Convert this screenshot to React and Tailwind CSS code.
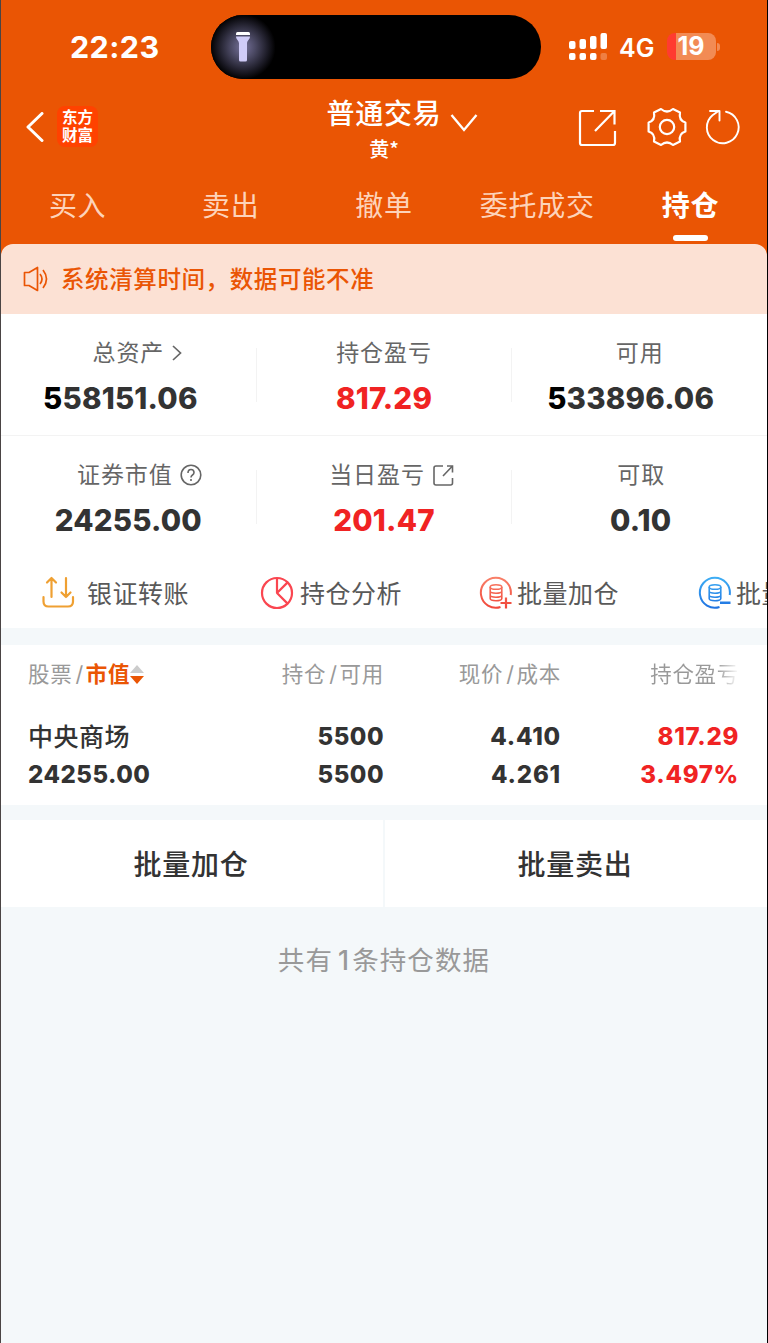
import React from 'react';

const tabs = ['买入', '卖出', '撤单', '委托成交', '持仓'];

const holdings = [
  {
    name: '中央商场',
    value: '24255.00',
    amount: '5500',
    available: '5500',
    price: '4.410',
    cost: '4.261',
    profit: '817.29',
    rate: '3.497%',
  },
];

function StatusBar() {
  return (
    <div className="h-[93px] flex items-center">
      <div className="w-[210px] pl-[69px] pt-[2px] text-[30.500px] leading-none font-bold tracking-[0.400px] text-white">22:23</div>
      <div className="w-[330px] h-16 rounded-full bg-black overflow-hidden">
        <div className="w-16 h-16 flex items-center justify-center bg-[radial-gradient(circle,#77739c_0%,#4a4862_28%,#1c1b26_55%,#000_72%)]">
          <svg width="14" height="30" viewBox="0 0 14 30">
            <path d="M0 1.5Q0 0 1.5 0h11Q14 0 14 1.5V3H0z" fill="#fff" />
            <path d="M0 4.5h14c0 3-3 4-3 7V28q0 1.500-1.500 1.500h-5Q3 29.500 3 28V11.500c0-3-3-4-3-7z" fill="#cfcbf7" />
          </svg>
        </div>
      </div>
      <svg className="ml-7" width="39" height="27" viewBox="0 0 39 27" fill="#fff">
        <rect x="0" y="8" width="6.500" height="8" rx="2" />
        <rect x="10.500" y="6" width="6.500" height="10" rx="2" />
        <rect x="21" y="3" width="6.500" height="13" rx="2" />
        <rect x="31.500" y="0" width="6.500" height="16" rx="2" />
        <rect x="0" y="20" width="6.500" height="7" rx="2" />
        <rect x="10.500" y="20" width="6.500" height="7" rx="2" />
        <rect x="21" y="20" width="6.500" height="7" rx="2" />
        <rect x="31.500" y="20" width="6.500" height="7" rx="2" opacity="0.250" />
      </svg>
      <div className="ml-[11px] w-[36px] pt-[3px] text-[25px] leading-none font-semibold text-white">4G</div>
      <div className="ml-[12px] w-[49px] h-[27px] rounded-[8px] bg-[linear-gradient(90deg,#ff3b30_9px,#f28b54_9px)] pr-[1px] flex items-center justify-center text-[25px] leading-[27px] font-bold text-white">
        19
      </div>
      <div className="ml-[1px] w-[3px] h-2 rounded-r-full bg-[#f28b54]" />
    </div>
  );
}

function Header() {
  return (
    <div className="h-[80px] flex items-start text-white">
      <div className="w-[310px] h-[67px] pl-[25px] flex items-center">
        <svg width="18" height="30" viewBox="0 0 18 30" fill="none" stroke="#fff" strokeWidth="3" strokeLinecap="round" strokeLinejoin="round">
          <path d="M16 1.500 2 15l14 13.500" />
        </svg>
        <div className="ml-[13px] size-[41px] rounded-[8px] bg-[#ff4200] pt-[3px] text-center text-[15.500px] leading-[17.500px] font-bold">
          东方
          <br />
          财富
        </div>
      </div>
      <div className="w-[146px] flex flex-col items-center pt-[5px]">
        <div className="text-[28px] leading-[33px] tracking-[0.700px] font-medium whitespace-nowrap">普通交易</div>
        <div className="mt-[8px] text-[20px] leading-[20px] font-medium">
          黄<span className="font-['Noto_Sans_CJK_SC']">*</span>
        </div>
      </div>
      <svg className="mt-[20px] -ml-[7px]" width="28" height="20" viewBox="0 0 28 20" fill="none" stroke="#fff" strokeWidth="2.400">
        <path d="M1.500 2 14 17 26.500 2" />
      </svg>
      <svg className="mt-[15px] ml-[99px]" width="40" height="40" viewBox="0 0 40 40" fill="none" stroke="#fff" strokeWidth="2.200">
        <path d="M17 3H5Q3 3 3 5v30q0 2 2 2h31q2 0 2-2V23M23 3h14.500v13.500M37.500 3 18 23" />
      </svg>
      <svg className="mt-[13px] ml-[29px]" width="42" height="42" viewBox="-21 -21 42 42" fill="none" stroke="#fff" strokeWidth="2.200" strokeLinejoin="round">
        <path d="M18.400-4.500V4.500Q11.500 6.500 13 14.500L6 18Q0 13 -6 18L-13 14.500Q-11.500 6.500-18.400 4.500V-4.500Q-11.500-6.500-13-14.500L-6-18Q0-13 6-18L13-14.500Q11.500-6.500 18.400-4.500z" />
        <circle r="7.200" />
      </svg>
      <svg className="mt-[14px] ml-[16px]" width="38" height="40" viewBox="0 0 38 40" fill="none" stroke="#fff" strokeWidth="1.900" strokeLinecap="round" strokeLinejoin="round">
        <path d="M22 4.800A15.900 15.900 0 1 1 8.500 8.200L14.500 4M6 4H15.500v9.500" />
      </svg>
    </div>
  );
}

function Tabs() {
  return (
    <div className="h-[71px] flex">
      {tabs.map((tab) => (
        <div key={tab} className="flex-1 flex flex-col items-center pt-[13px]">
          <div
            className={
              tab === '持仓'
                ? 'text-[28px] leading-[41px] tracking-[0.700px] font-bold text-white'
                : 'text-[28px] leading-[41px] tracking-[0.700px] text-[#fdd3ba]'
            }
          >
            {tab}
          </div>
          {tab === '持仓' && <div className="mt-[8px] w-[35px] h-[6px] rounded-full bg-white" />}
        </div>
      ))}
    </div>
  );
}

function Stat({ label, icon, value, labelClass = '', valueClass = '' }) {
  return (
    <div className="flex-1 flex flex-col items-center">
      <div className={`h-8 flex items-center text-[23px] leading-8 tracking-[0.900px] text-[#666] ${labelClass}`}>
        {label}
        {icon}
      </div>
      <div className={`mt-[11px] h-9 text-[29.500px] leading-9 tracking-[0.200px] font-extrabold ${valueClass}`}>{value}</div>
    </div>
  );
}

function Divider() {
  return <div className="mt-[11px] w-px h-[54px] bg-[#f3f3f3]" />;
}

// coin stack inside an open ring, used by both batch actions
function CoinIcon({ id, from, to, children }) {
  return (
    <svg width="34" height="34" viewBox="0 0 34 34" fill="none" stroke={`url(#${id})`} strokeWidth="2">
      <defs>
        <linearGradient id={id} gradientUnits="userSpaceOnUse" x1="0" y1="0" x2="0" y2="34">
          <stop offset="0" stopColor={from} />
          <stop offset="1" stopColor={to} />
        </linearGradient>
      </defs>
      <path d="M21.500 31A15 15 0 1 1 31.700 19" />
      <ellipse cx="17" cy="11" rx="5.800" ry="2.300" strokeWidth="1.600" />
      <path d="M11.200 11v11.500c0 3 11.600 3 11.600 0V11M11.200 15c0 3 11.600 3 11.600 0M11.200 19c0 3 11.600 3 11.600 0" strokeWidth="1.600" />
      {children}
    </svg>
  );
}

function Actions() {
  return (
    <div className="h-[76px] pl-[40px] pt-[6px] flex items-center overflow-hidden text-[25px] leading-8 tracking-[0.500px] text-[#595959] whitespace-nowrap">
      <div className="w-[219px] shrink-0 flex items-center">
        <svg width="34" height="34" viewBox="0 0 34 34" fill="none" stroke="#efa032" strokeWidth="2.200" strokeLinecap="round" strokeLinejoin="round">
          <path d="M10.500 21V2M6 6.500 10.500 2 15 6.500M25 2v19M29.500 16.500 25 21 20.500 16.500M2.500 21v4.500q0 5 5 5h19.500q5 0 5-5V21" />
        </svg>
        <span className="ml-[12px] pt-[1px]">银证转账</span>
      </div>
      <div className="w-[219px] shrink-0 flex items-center">
        <svg width="34" height="34" viewBox="0 0 34 34" fill="none" stroke="#fa4650" strokeWidth="2.200" strokeLinejoin="round">
          <circle cx="17" cy="17" r="15" />
          <path d="M17 2v15L27.600 6.400M17 17l10.600 10.600" />
        </svg>
        <span className="ml-[6px] pt-[1px]">持仓分析</span>
      </div>
      <div className="w-[219px] shrink-0 flex items-center">
        <CoinIcon id="coinAdd" from="#f9826a" to="#f04438">
          <path d="M27 21.500v11M21.500 27h11" strokeWidth="2.200" />
        </CoinIcon>
        <span className="ml-[4px] pt-[1px]">批量加仓</span>
      </div>
      <div className="w-[219px] shrink-0 flex items-center">
        <CoinIcon id="coinSub" from="#3fb0f5" to="#1d6fe0">
          <path d="M22 26.500h10.500M22 27h10.500" strokeWidth="2" />
        </CoinIcon>
        <span className="ml-[4px] pt-[1px]">批量卖出</span>
      </div>
    </div>
  );
}

function Holdings() {
  return (
    <div className="h-[160px] bg-white pl-[27px] pr-[28px] pt-[13px]">
      <div className="h-8 flex text-[21.500px] leading-8 tracking-[0.700px] text-[#999] whitespace-nowrap">
        <div className="w-[178px] flex items-center">
          股票<span className="ml-[3px] mr-[2px]">/</span>
          <span className="font-bold text-[#ea5504]">市值</span>
          <svg width="14" height="19" viewBox="0 0 14 19">
            <path d="M7 0l7 8H0z" fill="#ccc" />
            <path d="M7 19l7-8H0z" fill="#ea5504" />
          </svg>
        </div>
        <div className="w-[178px] text-right">
          持仓<span className="ml-[3px] mr-[2px]">/</span>可用
        </div>
        <div className="w-[177px] text-right">
          现价<span className="ml-[3px] mr-[2px]">/</span>成本
        </div>
        <div className="flex-1 text-right">
          <span className="bg-[linear-gradient(90deg,#999_75%,#fff_100%)] bg-clip-text text-transparent">持仓盈亏</span>
        </div>
      </div>
      {holdings.map((row) => (
        <div key={row.name} className="mt-[28px] flex text-[24px] leading-[38px] tracking-[0.500px] font-extrabold text-[#333]">
          <div className="w-[178px]">
            <div className="text-[25px] font-medium">{row.name}</div>
            <div>{row.value}</div>
          </div>
          <div className="w-[178px] text-right">
            <div>{row.amount}</div>
            <div>{row.available}</div>
          </div>
          <div className="w-[177px] text-right tracking-[0.800px]">
            <div>{row.price}</div>
            <div>{row.cost}</div>
          </div>
          <div className="flex-1 text-right tracking-[0.700px] text-[#f02323]">
            <div>{row.profit}</div>
            <div>{row.rate}</div>
          </div>
        </div>
      ))}
    </div>
  );
}

export default function App() {
  return (
    <div className="w-[768px] h-[1343px] overflow-hidden border-l border-r border-l-[#4a4444] border-r-black bg-[#f4f8fa] font-[Inter,'Noto_Sans_CJK_SC',sans-serif]">
      <div className="bg-[#ea5504]">
        <StatusBar />
        <Header />
        <Tabs />
        <div className="h-[70px] rounded-t-[12px] bg-[#fce1d4] pl-[22px] flex items-center text-[#ea5504]">
          <svg width="26" height="26" viewBox="0 0 26 26" fill="none" stroke="#ea5504" strokeWidth="1.700" strokeLinejoin="round">
            <path d="M1.500 6.500H6L14.500 1.500v23L6 19.500H1.500zM17 8q4 5 0 10M20 4q7 9 0 18" />
          </svg>
          <span className="ml-[12px] pt-[2px] text-[23.500px] leading-8 tracking-[0.600px] font-medium">系统清算时间，数据可能不准</span>
        </div>
      </div>

      <div className="bg-white">
        <div className="h-[122px] pt-[23px] flex border-b border-[#f3f3f3]">
          <Stat
            label="总资产"
            labelClass="pl-[18px]"
            icon={
              <svg className="ml-[8px]" width="10" height="16" viewBox="0 0 10 16" fill="none" stroke="#666" strokeWidth="1.700">
                <path d="M1 1l7.500 7L1 15" />
              </svg>
            }
            value={<><span className="text-black">5</span>58151.06</>}
            valueClass="pr-[16px] text-[#333]"
          />
          <Divider />
          <Stat label="持仓盈亏" value="817.29" valueClass="text-[#f02323]" />
          <Divider />
          <Stat label="可用" value={<><span className="text-black">5</span>33896.06</>} valueClass="pr-[18px] text-[#333]" />
        </div>
        <div className="h-[116px] pt-[23px] flex">
          <Stat
            label="证券市值"
            labelClass="pl-[22px]"
            icon={
              <svg className="ml-[7px]" width="22" height="22" viewBox="0 0 22 22" fill="none" stroke="#666" strokeWidth="1.600">
                <circle cx="11" cy="11" r="9.800" />
                <path d="M8 9q0-3.500 3-3.500t3 3q0 1.500-1.500 2.500T11 13.500M11 15v2" />
              </svg>
            }
            value="24255.00"
            valueClass="text-[#333]"
          />
          <Divider />
          <Stat
            label="当日盈亏"
            labelClass="pl-[15px]"
            icon={
              <svg className="ml-[8px]" width="21" height="21" viewBox="0 0 21 21" fill="none" stroke="#666" strokeWidth="1.600">
                <path d="M10 1H3Q1 1 1 3v15q0 2 2 2h14.500q2 0 2-2v-5M14 1h5.500v6.500M19.500 1 10 11" />
              </svg>
            }
            value="201.47"
            valueClass="text-[#f02323]"
          />
          <Divider />
          <Stat label="可取" labelClass="pl-[3px]" value="0.10" valueClass="text-[#333] pl-[2px]" />
        </div>
        <Actions />
      </div>

      <div className="mt-[17px]">
        <Holdings />
      </div>

      <div className="mt-[15px] h-[87px] flex gap-[2px] text-[28px] tracking-[0.700px] font-medium text-[#333]">
        <button className="flex-1 bg-white pr-[2px] pt-[3px]">批量加仓</button>
        <button className="flex-1 bg-white pr-[2px] pt-[3px]">批量卖出</button>
      </div>

      <div className="pt-[34px] text-center text-[26.500px] leading-[38px] tracking-[1.100px] text-[#999]">
        共有<span className="ml-[5px] mr-[2px] font-medium">1</span>条持仓数据
      </div>
    </div>
  );
}
